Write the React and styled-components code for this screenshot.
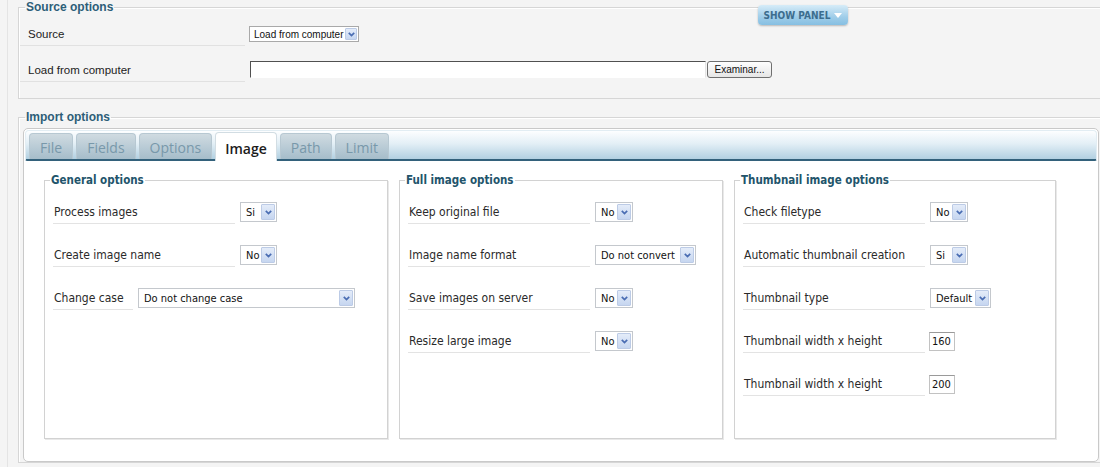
import styled, { createGlobalStyle } from 'styled-components'

const GlobalStyle = createGlobalStyle`
  html, body {
    margin: 0;
    padding: 0;
    overflow: hidden;
    background: #f4f4f4;
    font-family: "Liberation Sans", Arial, sans-serif;
  }
`

const tabs = ['File', 'Fields', 'Options', 'Image', 'Path', 'Limit']

const groups = [
  {
    title: 'General options',
    width: 344,
    rows: [
      { label: 'Process images', value: 'Si', w: 37 },
      { label: 'Create image name', value: 'No', w: 37 },
      { label: 'Change case', value: 'Do not change case', w: 217, labelWidth: 80 },
    ],
  },
  {
    title: 'Full image options',
    width: 324,
    rows: [
      { label: 'Keep original file', value: 'No', w: 38 },
      { label: 'Image name format', value: 'Do not convert', w: 101 },
      { label: 'Save images on server', value: 'No', w: 38 },
      { label: 'Resize large image', value: 'No', w: 38 },
    ],
  },
  {
    title: 'Thumbnail image options',
    width: 322,
    rows: [
      { label: 'Check filetype', value: 'No', w: 38 },
      { label: 'Automatic thumbnail creation', value: 'Si', w: 38 },
      { label: 'Thumbnail type', value: 'Default', w: 61 },
      { label: 'Thumbnail width x height', input: '160' },
      { label: 'Thumbnail width x height', input: '200' },
    ],
  },
]

function Chevron() {
  return (
    <svg width="9" height="7" viewBox="0 0 9 7">
      <path d="M1.8 1.8 L4.5 4.6 L7.2 1.8" fill="none" stroke="#4a6db3" strokeWidth="1.7" />
    </svg>
  )
}

function Dropdown({ value, width, small }) {
  return (
    <Select $width={width} $small={small}>
      <SelectValue $small={small}>{value}</SelectValue>
      <Arrow $small={small}><Chevron /></Arrow>
    </Select>
  )
}

function App() {
  return (
    <>
      <GlobalStyle />
      <Page>
        <ShowPanel>
          SHOW PANEL <Triangle />
        </ShowPanel>

        <SourceFieldset>
          <OuterLegend>Source options</OuterLegend>
          <SourceRow>
            <SourceLabel>Source</SourceLabel>
            <Dropdown value="Load from computer" width={110} small />
          </SourceRow>
          <SourceRow>
            <SourceLabel>Load from computer</SourceLabel>
            <FileBox />
            <BrowseButton>Examinar...</BrowseButton>
          </SourceRow>
        </SourceFieldset>

        <ImportFieldset>
          <OuterLegend $offset={2}>Import options</OuterLegend>
          <Panel>
            <TabBar>
              {tabs.map(t => (
                <Tab key={t} $active={t === 'Image'}>{t}</Tab>
              ))}
            </TabBar>
            <Groups>
              {groups.map(g => (
                <Group key={g.title} $width={g.width}>
                  <GroupLegend>{g.title}</GroupLegend>
                  {g.rows.map((r, i) => (
                    <OptionRow key={i}>
                      <OptionLabel $width={r.labelWidth}>{r.label}</OptionLabel>
                      {r.input
                        ? <NumberBox>{r.input}</NumberBox>
                        : <Dropdown value={r.value} width={r.w} />}
                    </OptionRow>
                  ))}
                </Group>
              ))}
            </Groups>
          </Panel>
        </ImportFieldset>
      </Page>
    </>
  )
}

const Page = styled.div`
  position: relative;
  margin-left: 7px;
  min-height: 467px;
  border-left: 1px solid #e4e4e4;
  padding-left: 10px;
  background: #f4f4f4;
`

const ShowPanel = styled.div`
  position: absolute;
  top: 5px;
  left: 750px;
  width: 90px;
  height: 20px;
  box-sizing: border-box;
  display: flex;
  align-items: center;
  justify-content: center;
  gap: 4px;
  border-radius: 4px;
  background: linear-gradient(#d6ecf8, #9fcde9 60%, #86bfe2);
  box-shadow: 0 1px 2px rgba(0, 0, 0, 0.25);
  color: #3c6d8e;
  font-family: "DejaVu Sans Condensed", "DejaVu Sans", sans-serif;
  font-size: 10px;
  font-weight: bold;
  z-index: 2;
`

const Triangle = styled.span`
  width: 0;
  height: 0;
  border-left: 4px solid transparent;
  border-right: 4px solid transparent;
  border-top: 5px solid #fff;
`

const Fieldset = styled.fieldset`
  margin: 0;
  padding: 0;
  border: 1px solid #d6d6d6;
  box-shadow: inset 1px 1px 0 #fff;
  box-sizing: border-box;
  min-width: 0;
`

const SourceFieldset = styled(Fieldset)`
  width: 1100px;
  padding: 8px 0 16px 1px;
  display: flex;
  flex-direction: column;
  gap: 12px;
`

const OuterLegend = styled.legend`
  margin-left: ${p => p.$offset ?? 5}px;
  padding: 0 1px;
  font-size: 12px;
  line-height: 14px;
  font-weight: bold;
  color: #2d5e78;
`

const SourceRow = styled.div`
  display: flex;
  align-items: center;
`

const SourceLabel = styled.div`
  width: 225px;
  height: 24px;
  line-height: 24px;
  box-sizing: border-box;
  padding-left: 8px;
  margin-right: 4px;
  border-bottom: 1px solid #e1e1e1;
  font-size: 11.5px;
  color: #222;
`

const Select = styled.div`
  display: flex;
  align-items: center;
  justify-content: space-between;
  width: ${p => p.$width}px;
  height: ${p => (p.$small ? 16 : 20)}px;
  box-sizing: border-box;
  border: 1px solid ${p => (p.$small ? '#a9a9a9' : '#c4c8cd')};
  background: #fff;
  padding: 1px;
`

const SelectValue = styled.span`
  padding-left: ${p => (p.$small ? 3 : 4)}px;
  font-family: ${p => (p.$small ? '"Liberation Sans", Arial, sans-serif' : '"DejaVu Sans Condensed", "DejaVu Sans", sans-serif')};
  font-size: ${p => (p.$small ? 10 : 11)}px;
  color: #111;
  white-space: nowrap;
`

const Arrow = styled.span`
  display: flex;
  align-items: center;
  justify-content: center;
  width: ${p => (p.$small ? 12 : 14)}px;
  height: 100%;
  box-sizing: border-box;
  border: 1px solid #bccbe6;
  border-radius: 1px;
  background: linear-gradient(#e4ecf9, #c6d6f0);
`

const FileBox = styled.div`
  width: 456px;
  height: 17px;
  box-sizing: border-box;
  margin-left: 1px;
  margin-top: -2px;
  background: #fff;
  border-top: 1px solid #505050;
  border-left: 1px solid #505050;
  border-right: 1px solid #e4e4e4;
  border-bottom: 1px solid #fff;
`

const BrowseButton = styled.div`
  width: 65px;
  height: 17px;
  box-sizing: border-box;
  margin-left: 1px;
  margin-top: -1px;
  border: 1px solid #6f6f6f;
  border-radius: 3px;
  background: linear-gradient(#fefefe, #e6e6e6);
  font-size: 10px;
  line-height: 15px;
  text-align: center;
  color: #111;
`

const ImportFieldset = styled(Fieldset)`
  width: 1100px;
  margin-top: 11px;
  padding: 4px 0 0 4px;
`

const Panel = styled.div`
  width: 1076px;
  height: 334px;
  box-sizing: border-box;
  border: 1px solid #c9c9c9;
  border-radius: 5px;
  background: #fff;
  padding: 1px;
`

const TabBar = styled.div`
  display: flex;
  align-items: flex-end;
  gap: 3px;
  height: 31px;
  box-sizing: border-box;
  padding-left: 3px;
  border: 1px solid #e2edf3;
  border-bottom: 2px solid #33617b;
  border-radius: 4px 4px 2px 2px;
  background: linear-gradient(#fdfeff, #e3eff6 45%, #b2d0e1);
`

const Tab = styled.div`
  height: ${p => (p.$active ? 29 : 26)}px;
  margin-bottom: ${p => (p.$active ? -2 : 0)}px;
  box-sizing: border-box;
  padding: ${p => (p.$active ? '3px 9px 0' : '2px 10px 0')};
  display: flex;
  align-items: center;
  border: 1px solid ${p => (p.$active ? '#d2dde3' : '#b7c8d2')};
  border-bottom: none;
  border-radius: 4px 4px 0 0;
  background: ${p => (p.$active ? '#fff' : 'linear-gradient(#d0dbe1, #b6c9d4 60%, #a6bdca)')};
  color: ${p => (p.$active ? '#1c1c1c' : '#7898aa')};
  font-family: "Open Sans", "DejaVu Sans", sans-serif;
  font-size: 14px;
  font-weight: ${p => (p.$active ? 600 : 400)};
`

const Groups = styled.div`
  display: flex;
  gap: 11px;
  padding: 12px 0 0 19px;
`

const Group = styled(Fieldset)`
  width: ${p => p.$width}px;
  height: 266px;
  padding: 13px 0 0 8px;
  border-color: #d2d2d2;
  box-shadow: 1px 1px 0 #e9e9e9;
  background: #fff;
  display: flex;
  flex-direction: column;
  gap: 19px;
`

const GroupLegend = styled.legend`
  margin-left: -3px;
  padding: 0 1px;
  font-family: "DejaVu Sans Condensed", "DejaVu Sans", sans-serif;
  font-size: 11.5px;
  line-height: 14px;
  font-weight: bold;
  color: #22546b;
`

const OptionRow = styled.div`
  display: flex;
  align-items: center;
`

const OptionLabel = styled.div`
  width: ${p => p.$width || 182}px;
  height: 24px;
  line-height: 24px;
  box-sizing: border-box;
  padding-left: 1px;
  margin-right: 5px;
  border-bottom: 1px solid #e3e3e3;
  font-family: "DejaVu Sans Condensed", "DejaVu Sans", sans-serif;
  font-size: 12px;
  color: #2a2a2a;
  white-space: nowrap;
`

const NumberBox = styled.div`
  width: 26px;
  height: 19px;
  box-sizing: border-box;
  margin-left: -1px;
  border: 1px solid #c2c2c2;
  border-top-color: #9a9a9a;
  padding-left: 2px;
  font-family: "DejaVu Sans Condensed", "DejaVu Sans", sans-serif;
  font-size: 11px;
  line-height: 17px;
  color: #111;
`

export default App
